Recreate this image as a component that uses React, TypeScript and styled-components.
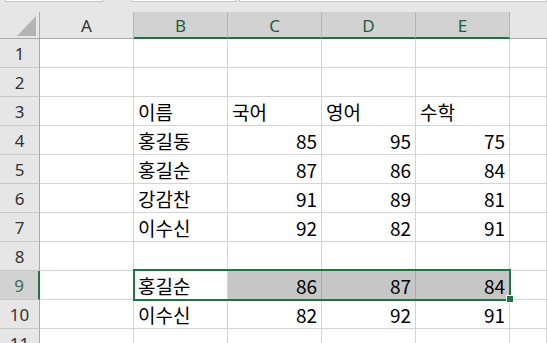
import React from "react";
import styled, { createGlobalStyle } from "styled-components";

const GlobalStyle = createGlobalStyle`
    html, body {
        margin: 0;
        padding: 0;
        background: #ffffff;
        overflow: hidden;
    }
    * {
        box-sizing: border-box;
    }
`;

const Sheet = styled.div`
    width: 547px;
    height: 343px;
    overflow: hidden;
    background: #ffffff;
`;

const TopStrip = styled.div`
    height: 12px;
    background: #e6e6e6;
    display: flex;
    align-items: flex-start;
    padding-left: 5px;
`;

const StripBox = styled.div<{ w?: number; gapLeft: number }>`
    height: 2px;
    width: ${p => (p.w ? `${p.w}px` : "auto")};
    flex: ${p => (p.w ? "none" : "1")};
    margin-left: ${p => p.gapLeft}px;
    background: #ffffff;
    border: 1px solid #c6c6c6;
    border-top: none;
`;

const Grid = styled.div`
    position: relative;
    display: grid;
    grid-template-columns: 40px repeat(5, 94px) 1fr;
    grid-template-rows: 27px repeat(11, 29px);
`;

const Corner = styled.div`
    position: relative;
    background: #e6e6e6;
    border-right: 1px solid #ababab;
    border-bottom: 1px solid #ababab;

    &::after {
        content: "";
        position: absolute;
        right: 3px;
        bottom: 2px;
        width: 0;
        height: 0;
        border-left: 19px solid transparent;
        border-bottom: 20px solid #b4b4b4;
    }
`;

const ColHead = styled.div<{ selected?: boolean }>`
    display: flex;
    align-items: center;
    justify-content: center;
    padding-top: 1px;
    background: ${p => (p.selected ? "#d2d2d2" : "#e6e6e6")};
    border-right: 1px solid #b4b4b4;
    border-bottom: ${p => (p.selected ? "2px solid #217346" : "1px solid #ababab")};
    color: ${p => (p.selected ? "#1d5e3f" : "#333333")};
    font-family: "Noto Sans", "Liberation Sans", sans-serif;
    font-size: 17px;
    line-height: 1;
`;

const BlankHead = styled.div`
    background: #e6e6e6;
    border-bottom: 1px solid #ababab;
`;

const RowHead = styled.div<{ selected?: boolean }>`
    display: flex;
    align-items: center;
    justify-content: center;
    padding-top: 1px;
    background: ${p => (p.selected ? "#d2d2d2" : "#e6e6e6")};
    border-right: ${p => (p.selected ? "2px solid #217346" : "1px solid #ababab")};
    border-bottom: 1px solid #c8c8c8;
    color: ${p => (p.selected ? "#3a6a55" : "#333333")};
    font-family: "Noto Sans", "Liberation Sans", sans-serif;
    font-size: 17px;
    line-height: 1;
`;

const Cell = styled.div<{ num?: boolean; shaded?: boolean }>`
    display: flex;
    align-items: center;
    justify-content: ${p => (p.num ? "flex-end" : "flex-start")};
    padding: 0 4px 0 4px;
    background: ${p => (p.shaded ? "#c6c6c6" : "#ffffff")};
    border-right: 1px solid ${p => (p.shaded ? "#aaaaaa" : "#d4d4d4")};
    border-bottom: 1px solid #d4d4d4;
    color: #000000;
    font-family: "Noto Sans CJK KR", sans-serif;
    font-size: 19px;
    line-height: 1;
    white-space: nowrap;
`;

const Selection = styled.div`
    position: absolute;
    left: 133px;
    top: 257px;
    width: 378px;
    height: 32px;
    border: 2px solid #217346;
    pointer-events: none;
`;

const FillHandle = styled.div`
    position: absolute;
    left: 506px;
    top: 283px;
    width: 8px;
    height: 8px;
    background: #217346;
    border: 1px solid #ffffff;
`;

type Row = { n: number; b?: string; vals?: (string | number)[]; text?: boolean };

const rows: Row[] = [
    { n: 1 },
    { n: 2 },
    { n: 3, b: "이름", vals: ["국어", "영어", "수학"], text: true },
    { n: 4, b: "홍길동", vals: [85, 95, 75] },
    { n: 5, b: "홍길순", vals: [87, 86, 84] },
    { n: 6, b: "강감찬", vals: [91, 89, 81] },
    { n: 7, b: "이수신", vals: [92, 82, 91] },
    { n: 8 },
    { n: 9, b: "홍길순", vals: [86, 87, 84] },
    { n: 10, b: "이수신", vals: [82, 92, 91] },
    { n: 11 },
];

const SELECTED_ROW = 9;

export default function App() {
    return (
        <Sheet>
            <GlobalStyle />
            <TopStrip>
                <StripBox w={98} gapLeft={0} />
                <StripBox w={105} gapLeft={28} />
                <StripBox gapLeft={3} />
            </TopStrip>
            <Grid>
                <Corner />
                <ColHead>A</ColHead>
                {["B", "C", "D", "E"].map(c => (
                    <ColHead key={c} selected>{c}</ColHead>
                ))}
                <BlankHead />

                {rows.map(r => {
                    const sel = r.n === SELECTED_ROW;
                    return (
                        <React.Fragment key={r.n}>
                            <RowHead selected={sel}>{r.n}</RowHead>
                            <Cell />
                            <Cell>{r.b}</Cell>
                            {[0, 1, 2].map(i => (
                                <Cell key={i} num={!r.text} shaded={sel}>
                                    {r.vals ? r.vals[i] : null}
                                </Cell>
                            ))}
                            <Cell />
                        </React.Fragment>
                    );
                })}

                <Selection />
                <FillHandle />
            </Grid>
        </Sheet>
    );
}
